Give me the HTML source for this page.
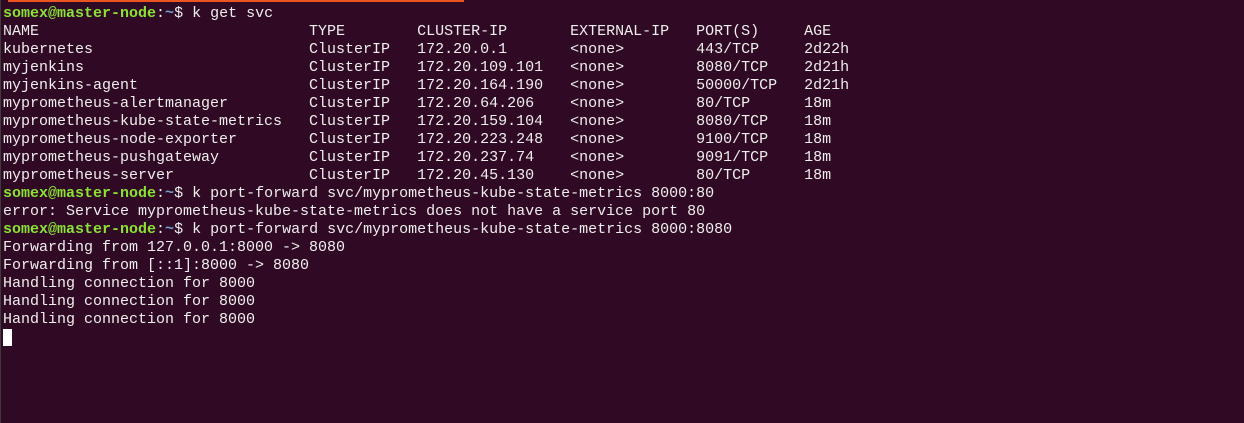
<!DOCTYPE html>
<html><head><style>
html,body{margin:0;padding:0;width:1244px;height:423px;overflow:hidden;background:#300a24;}
body{position:relative;}
.bar{position:absolute;left:8px;top:0;width:456px;height:2px;background:#e95420;}
.lb{position:absolute;left:0;top:0;width:1px;height:423px;background:#3c3c3c;}
pre{position:absolute;left:3px;top:5px;margin:0;font-family:"Liberation Mono",monospace;font-size:15px;line-height:18px;color:#eeeeec;}
.g{color:#8ae234;font-weight:bold}.b{color:#729fcf;font-weight:bold}
.cur{display:inline-block;width:9px;height:17px;background:#fff;vertical-align:-4px;}
</style></head><body>
<div class="bar"></div><div class="lb"></div>
<pre><span class="g">somex@master-node</span>:<span class="b">~</span>$ k get svc
NAME                              TYPE        CLUSTER-IP       EXTERNAL-IP   PORT(S)     AGE
kubernetes                        ClusterIP   172.20.0.1       &lt;none&gt;        443/TCP     2d22h
myjenkins                         ClusterIP   172.20.109.101   &lt;none&gt;        8080/TCP    2d21h
myjenkins-agent                   ClusterIP   172.20.164.190   &lt;none&gt;        50000/TCP   2d21h
myprometheus-alertmanager         ClusterIP   172.20.64.206    &lt;none&gt;        80/TCP      18m
myprometheus-kube-state-metrics   ClusterIP   172.20.159.104   &lt;none&gt;        8080/TCP    18m
myprometheus-node-exporter        ClusterIP   172.20.223.248   &lt;none&gt;        9100/TCP    18m
myprometheus-pushgateway          ClusterIP   172.20.237.74    &lt;none&gt;        9091/TCP    18m
myprometheus-server               ClusterIP   172.20.45.130    &lt;none&gt;        80/TCP      18m
<span class="g">somex@master-node</span>:<span class="b">~</span>$ k port-forward svc/myprometheus-kube-state-metrics 8000:80
error: Service myprometheus-kube-state-metrics does not have a service port 80
<span class="g">somex@master-node</span>:<span class="b">~</span>$ k port-forward svc/myprometheus-kube-state-metrics 8000:8080
Forwarding from 127.0.0.1:8000 -&gt; 8080
Forwarding from [::1]:8000 -&gt; 8080
Handling connection for 8000
Handling connection for 8000
Handling connection for 8000
<span class="cur"></span></pre>
</body></html>
